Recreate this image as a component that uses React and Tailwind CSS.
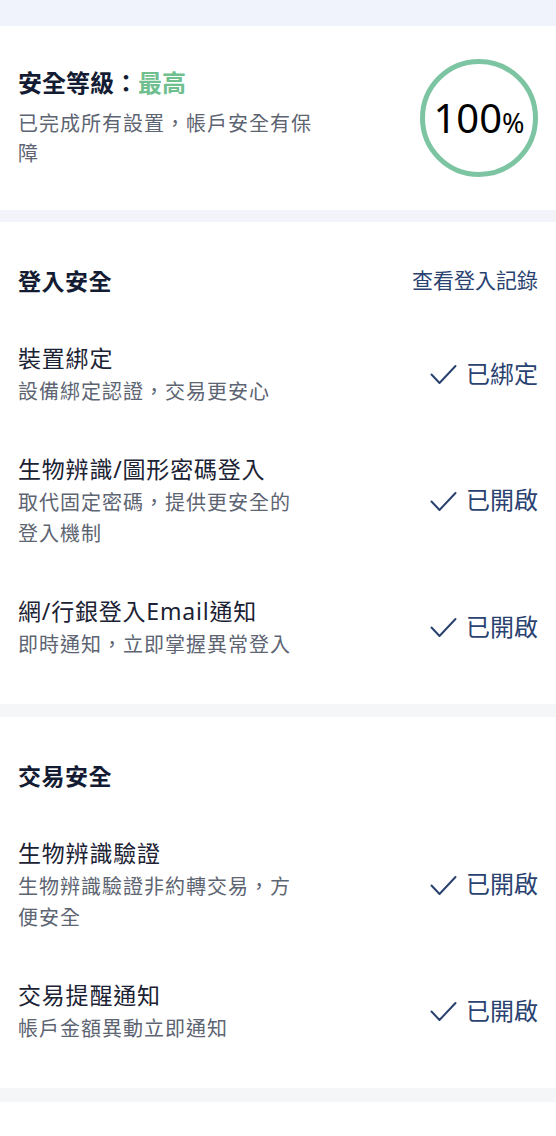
import React from "react";

const font = { fontFamily: '"Noto Sans", "Noto Sans CJK TC", sans-serif' };

function Check() {
  return (
    <svg width="27" height="21" viewBox="0 0 27 21" fill="none" className="shrink-0 mt-[2px]">
      <path d="M1.5 10.5 L9.5 19 L25.5 2" stroke="#2a4270" strokeWidth="2" strokeLinecap="round" strokeLinejoin="round" />
    </svg>
  );
}

function Item({ title, desc, status }) {
  return (
    <div className="flex items-center justify-between py-[22px]">
      <div className="w-[285px]">
        <div className="text-[23px] leading-[36px] tracking-[0.8px] text-[#1b2233]">{title}</div>
        <div className="text-[20px] leading-[31px] tracking-[1px] text-[#5d6472]">{desc}</div>
      </div>
      <div className="flex items-center gap-[9px] text-[24px] text-[#2a4270]">
        <Check />
        <span>{status}</span>
      </div>
    </div>
  );
}

function Section({ heading, link, children }) {
  return (
    <div className="bg-white px-[18px] pt-[44px] pb-[22px]">
      <div className="mb-[22px] flex h-[30px] items-center justify-between">
        <div className="text-[23px] font-bold tracking-[0.5px] text-[#141c33]">{heading}</div>
        {link && <div className="text-[21px] text-[#2a4270]">{link}</div>}
      </div>
      {children}
    </div>
  );
}

export default function App() {
  return (
    <div className="w-[556px] min-h-[1136px] bg-white" style={font}>
      <div className="h-[26px] bg-[#f0f3fc]" />
      <div className="flex items-center justify-between bg-white px-[18px] py-[33px]">
        <div className="w-[305px]">
          <div className="text-[24px] leading-[30px] font-bold text-[#141c33]">
            安全等級：<span className="text-[#6fbf8f]">最高</span>
          </div>
          <div className="mt-[11px] text-[20px] leading-[30px] tracking-[1px] text-[#5d6472]">
            已完成所有設置，帳戶安全有保障
          </div>
        </div>
        <div className="flex h-[118px] w-[118px] items-center justify-center rounded-full border-[5px] border-[#7cc4a2]">
          <span className="text-[40px] leading-none text-black" style={{ fontFamily: '"Noto Sans", sans-serif' }}>
            100<span className="text-[27px]">%</span>
          </span>
        </div>
      </div>
      <div className="h-[12px] bg-[#f2f4fa]" />
      <Section heading="登入安全" link="查看登入記錄">
        <Item title="裝置綁定" desc="設備綁定認證，交易更安心" status="已綁定" />
        <Item title="生物辨識/圖形密碼登入" desc="取代固定密碼，提供更安全的登入機制" status="已開啟" />
        <Item title="網/行銀登入Email通知" desc="即時通知，立即掌握異常登入" status="已開啟" />
      </Section>
      <div className="h-[13px] bg-[#f5f6f8]" />
      <Section heading="交易安全">
        <Item title="生物辨識驗證" desc="生物辨識驗證非約轉交易，方便安全" status="已開啟" />
        <Item title="交易提醒通知" desc="帳戶金額異動立即通知" status="已開啟" />
      </Section>
      <div className="h-[14px] bg-[#f5f6f8]" />
    </div>
  );
}
